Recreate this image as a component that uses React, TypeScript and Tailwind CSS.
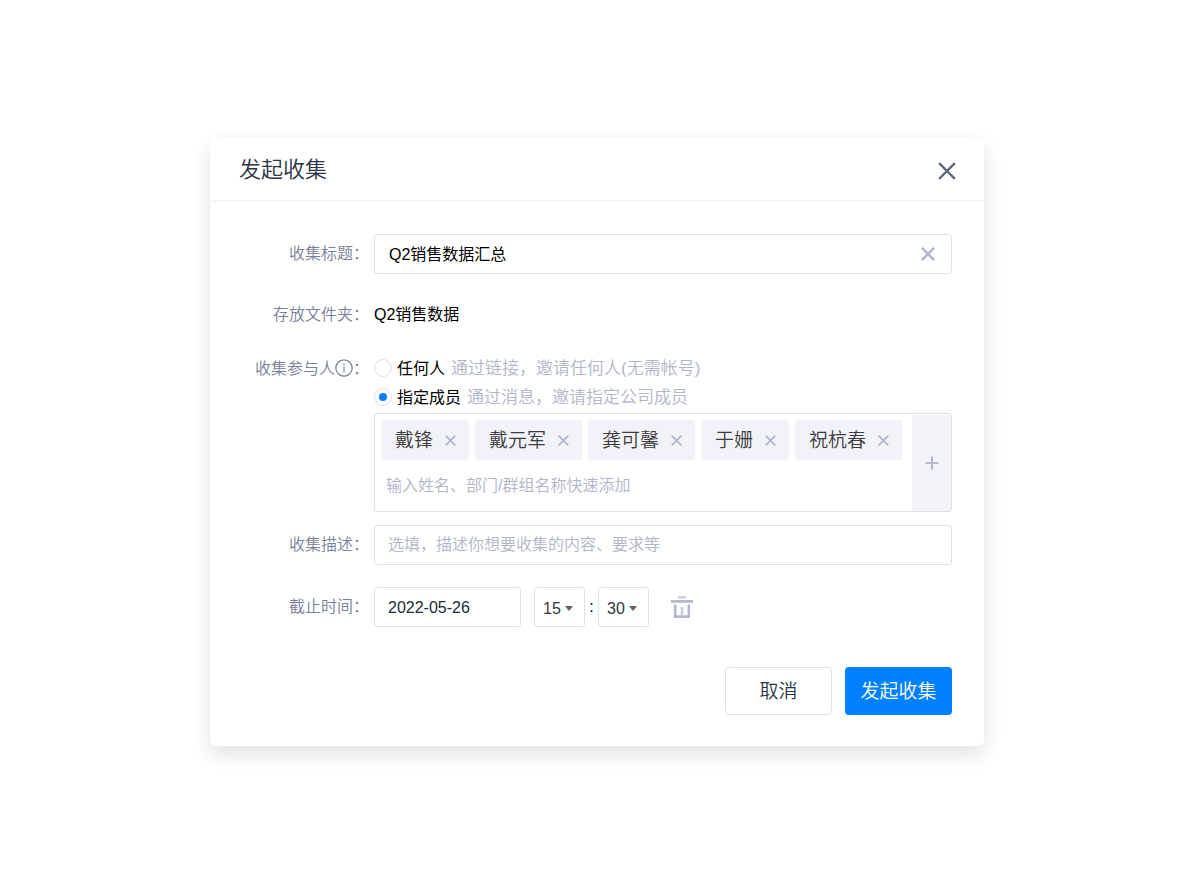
import { useState } from "react";
import type { ReactNode } from "react";

function Cross({ className, width = 2 }: { className: string; width?: number }) {
  return (
    <svg viewBox="0 0 16 16" className={className} fill="none" stroke="currentColor" strokeWidth={width} aria-hidden="true">
      <path d="M1 1L15 15M15 1L1 15" />
    </svg>
  );
}

function InfoIcon() {
  return (
    <svg viewBox="0 0 18 18" className="size-[18px]" fill="none" stroke="currentColor" aria-hidden="true">
      <circle cx="9" cy="9" r="8.2" strokeWidth="1.2" />
      <path d="M9 7.5V13.2" strokeWidth="1.2" />
      <path d="M9 4.5V6" strokeWidth="1.4" />
    </svg>
  );
}

function TrashIcon() {
  return (
    <svg viewBox="0 0 22 22" className="size-[22px]" fill="none" aria-hidden="true">
      <rect x="7" y="0" width="8" height="2.6" fill="#cdd0df" />
      <rect x="0" y="4" width="22" height="2.8" fill="#b4b8cf" />
      <path d="M4.2 8.4V20.6H17.8V8.4" stroke="#b4b8cf" strokeWidth="2.6" />
      <rect x="9.6" y="11" width="2.8" height="8.4" fill="#cdd0df" />
    </svg>
  );
}

const labelStyle = "flex w-[159px] shrink-0 items-center justify-end font-[350] text-[#78809a]";
const fieldBox = "rounded-[3px] border border-[#dfe1ea] bg-white";

function Label({ htmlFor, children }: { htmlFor: string; children: ReactNode }) {
  return (
    <label htmlFor={htmlFor} className={labelStyle}>
      {children}
    </label>
  );
}

function TimeSelect({ label, value, max, step }: { label: string; value: string; max: number; step: number }) {
  const options = Array.from({ length: Math.ceil(max / step) }, (_, i) => String(i * step).padStart(2, "0"));
  return (
    <div className="relative">
      <select
        aria-label={label}
        defaultValue={value}
        className={`${fieldBox} h-10 w-[51px] appearance-none pt-1 pl-2 text-[#333840] outline-none`}
      >
        {options.map((o) => (
          <option key={o}>{o}</option>
        ))}
      </select>
      <svg viewBox="0 0 8 5" className="pointer-events-none absolute top-[19px] right-3 h-[5px] w-2" aria-hidden="true">
        <path d="M0 0H8L4 5Z" fill="#5f6268" />
      </svg>
    </div>
  );
}

function Option({ value, title, hint, checked, onSelect }: { value: string; title: string; hint: string; checked: boolean; onSelect: (v: string) => void }) {
  return (
    <label className="flex h-6 items-center">
      <input
        type="radio"
        name="scope"
        value={value}
        checked={checked}
        onChange={() => onSelect(value)}
        className="grid size-[18px] shrink-0 appearance-none place-content-center rounded-full border border-[#e0e2ea] bg-white before:size-2 before:rounded-full checked:before:bg-[#0080ff]"
      />
      <span className="ml-[5px] shrink-0 pt-0.5 text-black">{title}</span>
      <span className="ml-1.5 pt-0.5 text-[17px] font-[350] text-[#b0b5c8]">{hint}</span>
    </label>
  );
}

export default function App() {
  const [title, setTitle] = useState("Q2销售数据汇总");
  const [scope, setScope] = useState("members");
  const [members, setMembers] = useState(["戴锋", "戴元军", "龚可馨", "于姗", "祝杭春"]);

  return (
    <main className="flex min-h-screen items-center justify-center bg-white pl-0.5 font-['Liberation_Sans','Noto_Sans_CJK_SC',sans-serif] text-base leading-6">
      <section aria-labelledby="dialog-title" className="w-full max-w-[774px] rounded-md bg-white shadow-[0_8px_20px_rgba(0,0,0,0.12)]">
        <header className="flex h-16 items-center justify-between border-b-2 border-[#f5f5f6] pt-0.5 pr-7 pl-[29px]">
          <h1 id="dialog-title" className="text-[22px] font-[350] text-[#2b3440]">发起收集</h1>
          <button type="button" aria-label="关闭" className="mt-0.5 text-[#5c667d]">
            <Cross className="size-[18px]" />
          </button>
        </header>

        <form className="pt-8 pr-8 pb-[31px]" onSubmit={(e) => e.preventDefault()}>
          <div className="flex gap-[5px]">
            <Label htmlFor="title">收集标题：</Label>
            <div className={`${fieldBox} flex h-10 min-w-0 flex-1 items-center pr-4 pl-3.5`}>
              <input id="title" value={title} onChange={(e) => setTitle(e.target.value)} className="min-w-0 flex-1 pt-0.5 text-black outline-none" />
              <button type="button" aria-label="清空" onClick={() => setTitle("")} className="text-[#aeb6ca]">
                <Cross className="size-3.5" width={2.8} />
              </button>
            </div>
          </div>

          <div className="mt-[29px] flex gap-[5px]">
            <span className={labelStyle}>存放文件夹：</span>
            <span className="text-black">Q2销售数据</span>
          </div>

          <div className="mt-[29px] flex gap-[5px]">
            <span className={`${labelStyle} h-6`}>
              <span className="pt-0.5">收集参与人</span>
              <InfoIcon />
              <span className="pt-0.5">：</span>
            </span>
            <div className="min-w-0 flex-1">
              <div className="flex flex-col gap-[5px]">
                <Option value="anyone" title="任何人" hint="通过链接，邀请任何人(无需帐号)" checked={scope === "anyone"} onSelect={setScope} />
                <Option value="members" title="指定成员" hint="通过消息，邀请指定公司成员" checked={scope === "members"} onSelect={setScope} />
              </div>
              <div className={`${fieldBox} mt-1 flex`}>
                <div className="min-w-0 flex-1 pt-1.5 pb-3.5 pl-1.5">
                  <ul className="flex flex-wrap gap-1.5">
                    {members.map((name) => (
                      <li key={name} className="flex h-10 items-center gap-3 rounded-[3px] bg-[#f2f3f9] pr-[13px] pl-3.5 text-[19px] font-[350] text-[#3c3c3c]">
                        <span className="pt-0.5">{name}</span>
                        <button type="button" aria-label={`移除${name}`} onClick={() => setMembers(members.filter((m) => m !== name))} className="text-[#aeb4c8]">
                          <Cross className="size-[11px]" width={2.4} />
                        </button>
                      </li>
                    ))}
                  </ul>
                  <input
                    aria-label="添加成员"
                    placeholder="输入姓名、部门/群组名称快速添加"
                    className="mt-3 ml-[5px] block h-[25px] w-80 max-w-full pt-0.5 font-[350] outline-none placeholder:text-[#b0b5c8]"
                  />
                </div>
                <button type="button" aria-label="选择成员" className="mt-px flex w-[39px] shrink-0 items-center justify-center bg-[#f2f3f9] text-[#b4b8cc]">
                  <svg viewBox="0 0 14 14" className="size-3.5" stroke="currentColor" strokeWidth="2.2" aria-hidden="true">
                    <path d="M7 0.5V13.5M0.5 7H13.5" />
                  </svg>
                </button>
              </div>
            </div>
          </div>

          <div className="mt-[13px] flex gap-[5px]">
            <Label htmlFor="description">收集描述：</Label>
            <input
              id="description"
              placeholder="选填，描述你想要收集的内容、要求等"
              className={`${fieldBox} h-10 min-w-0 flex-1 px-[13px] font-[350] outline-none placeholder:text-[#b0b5c8]`}
            />
          </div>

          <div className="mt-[22px] flex gap-[5px]">
            <Label htmlFor="deadline">截止时间：</Label>
            <div className="flex items-center">
              <input id="deadline" defaultValue="2022-05-26" className={`${fieldBox} h-10 w-[147px] px-[13px] pt-0.5 text-[#222b36] outline-none`} />
              <div className="ml-[13px] flex items-center">
                <TimeSelect label="时" value="15" max={24} step={1} />
                <span className="w-[13px] text-center text-black">:</span>
                <TimeSelect label="分" value="30" max={60} step={5} />
              </div>
              <button type="button" aria-label="清除截止时间" className="ml-[22px]">
                <TrashIcon />
              </button>
            </div>
          </div>

          <div className="mt-10 flex justify-end gap-[13px] text-[19px] font-[350]">
            <button type="button" className="h-12 w-[107px] rounded border border-[#dfe1ea] bg-white pt-0.5 text-[#2b3440]">取消</button>
            <button type="submit" className="h-12 w-[107px] rounded bg-[#0080ff] pt-0.5 text-white">发起收集</button>
          </div>
        </form>
      </section>
    </main>
  );
}
